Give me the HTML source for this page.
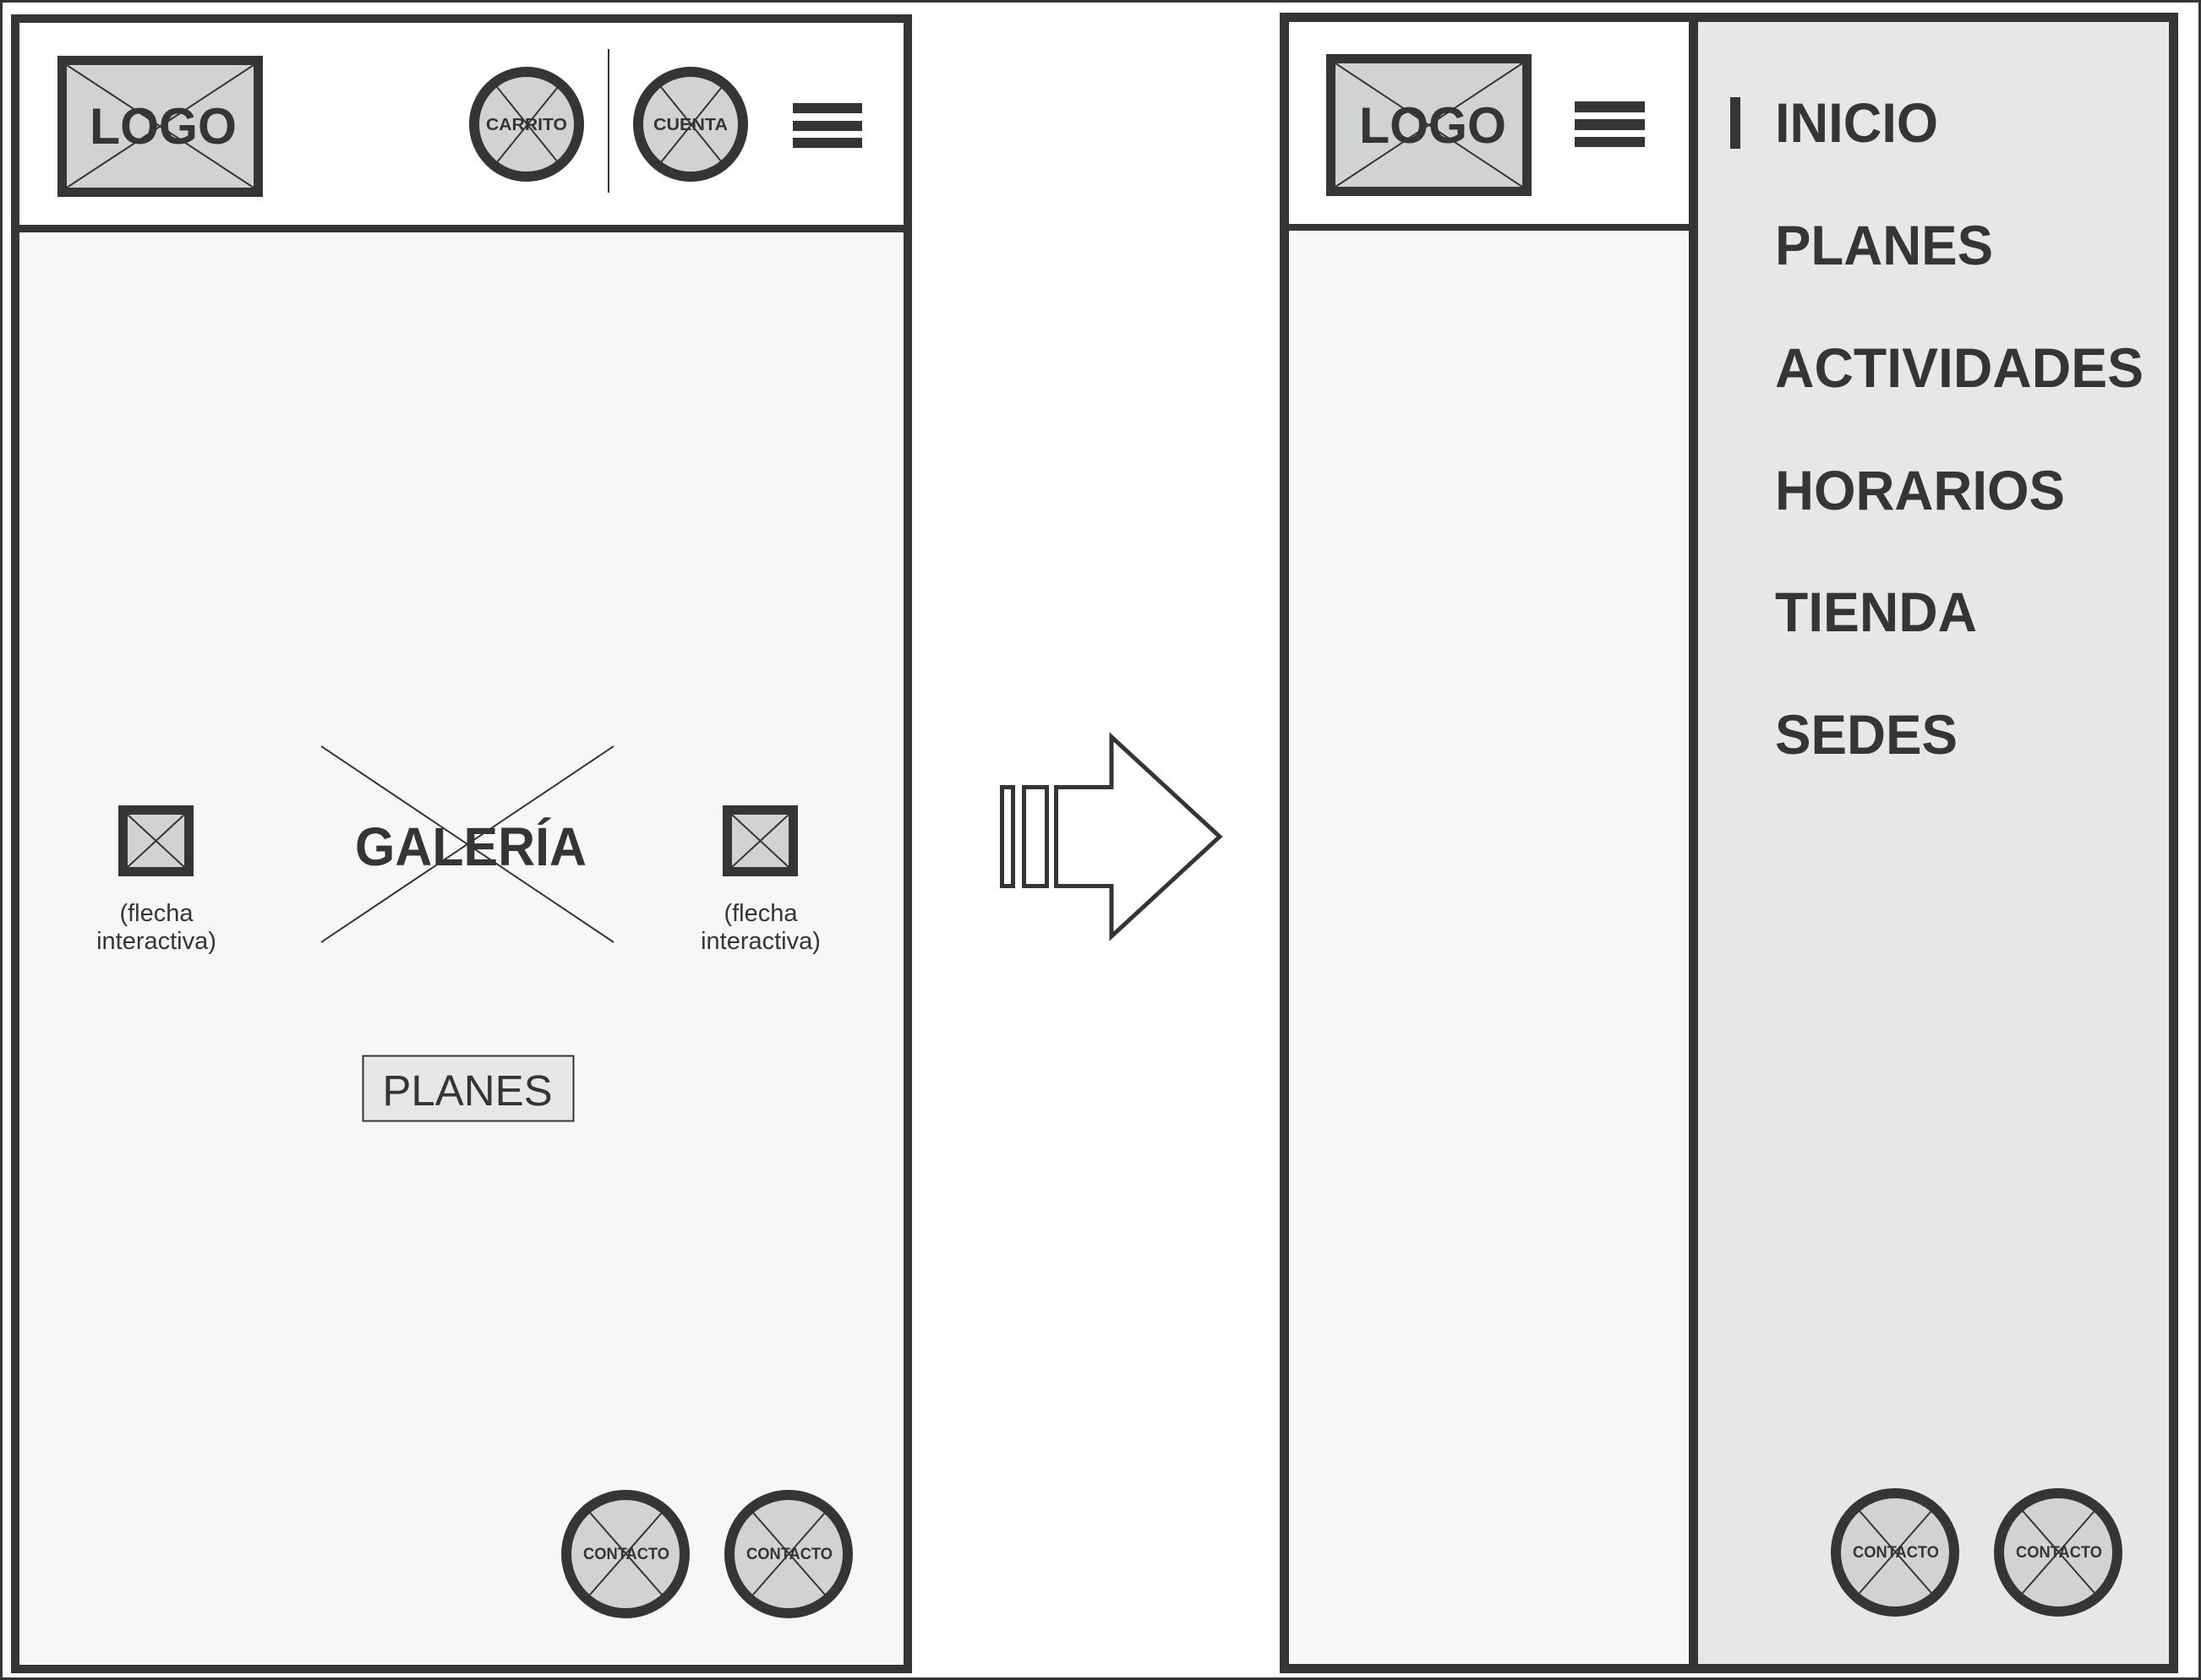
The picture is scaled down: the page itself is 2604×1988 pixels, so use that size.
<!DOCTYPE html>
<html><head><meta charset="utf-8"><style>
html,body{margin:0;padding:0;background:#fff;}
svg{display:block;}
text{font-family:"Liberation Sans",Arial,sans-serif;fill:#363435;}
</style></head><body>
<svg width="2604" height="1988" viewBox="0 0 2604 1988" xmlns="http://www.w3.org/2000/svg">
<rect x="1.5" y="1.5" width="2601" height="1985" fill="#fff" stroke="#363435" stroke-width="3"/>

<!-- LEFT PANEL -->
<rect x="18" y="22" width="1056" height="1953" fill="#f7f7f7" stroke="#363435" stroke-width="10"/>
<rect x="23" y="27" width="1046" height="240" fill="#fff"/>
<rect x="23" y="266" width="1046" height="9" fill="#363435"/>

<!-- logo -->
<rect x="73.5" y="71.5" width="232" height="156" fill="#d1d2d4" stroke="#363435" stroke-width="11"/>
<line x1="79" y1="77" x2="300" y2="222" stroke="#363435" stroke-width="2"/>
<line x1="300" y1="77" x2="79" y2="222" stroke="#363435" stroke-width="2"/>
<text x="106" y="170" font-size="60" font-weight="bold" textLength="174" lengthAdjust="spacingAndGlyphs">LOGO</text>

<!-- carrito -->
<circle cx="623" cy="147" r="62" fill="#d1d2d4" stroke="#363435" stroke-width="12"/>
<line x1="588" y1="103" x2="660" y2="192" stroke="#363435" stroke-width="2"/>
<line x1="660" y1="103" x2="588" y2="192" stroke="#363435" stroke-width="2"/>
<text x="575" y="154" font-size="20" font-weight="bold" textLength="96" lengthAdjust="spacingAndGlyphs">CARRITO</text>
<rect x="719" y="58" width="2" height="170" fill="#363435"/>
<!-- cuenta -->
<circle cx="817" cy="147" r="62" fill="#d1d2d4" stroke="#363435" stroke-width="12"/>
<line x1="782" y1="103" x2="854" y2="192" stroke="#363435" stroke-width="2"/>
<line x1="854" y1="103" x2="782" y2="192" stroke="#363435" stroke-width="2"/>
<text x="773" y="154" font-size="20" font-weight="bold" textLength="88" lengthAdjust="spacingAndGlyphs">CUENTA</text>
<!-- hamburger -->
<rect x="938" y="122" width="82" height="12" fill="#363435"/>
<rect x="938" y="143" width="82" height="12" fill="#363435"/>
<rect x="938" y="163" width="82" height="12" fill="#363435"/>

<!-- gallery -->
<rect x="145.5" y="958.5" width="78" height="73" fill="#d1d2d4" stroke="#363435" stroke-width="11"/>
<line x1="151" y1="964" x2="218" y2="1026" stroke="#363435" stroke-width="2"/>
<line x1="218" y1="964" x2="151" y2="1026" stroke="#363435" stroke-width="2"/>
<text x="185" y="1090" font-size="29" text-anchor="middle">(flecha</text>
<text x="185" y="1123" font-size="29" text-anchor="middle">interactiva)</text>
<rect x="860.5" y="958.5" width="78" height="73" fill="#d1d2d4" stroke="#363435" stroke-width="11"/>
<line x1="866" y1="964" x2="933" y2="1026" stroke="#363435" stroke-width="2"/>
<line x1="933" y1="964" x2="866" y2="1026" stroke="#363435" stroke-width="2"/>
<text x="900" y="1090" font-size="29" text-anchor="middle">(flecha</text>
<text x="900" y="1123" font-size="29" text-anchor="middle">interactiva)</text>

<line x1="380" y1="883" x2="726" y2="1115" stroke="#363435" stroke-width="2"/>
<line x1="726" y1="883" x2="380" y2="1115" stroke="#363435" stroke-width="2"/>
<text x="420" y="1024" font-size="64" font-weight="bold" textLength="274" lengthAdjust="spacingAndGlyphs">GALERÍA</text>

<rect x="429.5" y="1249.5" width="249" height="77" fill="#e6e7e8" stroke="#363435" stroke-width="2"/>
<text x="553" y="1308" font-size="51" text-anchor="middle">PLANES</text>

<!-- contact -->
<circle cx="740" cy="1839" r="70" fill="#d1d2d4" stroke="#363435" stroke-width="12"/>
<line x1="698" y1="1790" x2="783" y2="1887" stroke="#363435" stroke-width="2"/>
<line x1="783" y1="1790" x2="698" y2="1887" stroke="#363435" stroke-width="2"/>
<text x="690" y="1845" font-size="19" font-weight="bold" textLength="102" lengthAdjust="spacingAndGlyphs">CONTACTO</text>
<circle cx="933" cy="1839" r="70" fill="#d1d2d4" stroke="#363435" stroke-width="12"/>
<line x1="891" y1="1790" x2="976" y2="1887" stroke="#363435" stroke-width="2"/>
<line x1="976" y1="1790" x2="891" y2="1887" stroke="#363435" stroke-width="2"/>
<text x="883" y="1845" font-size="19" font-weight="bold" textLength="102" lengthAdjust="spacingAndGlyphs">CONTACTO</text>

<!-- ARROW -->
<rect x="1185.5" y="931.5" width="13" height="117" fill="#fff" stroke="#363435" stroke-width="5"/>
<rect x="1211.5" y="931.5" width="27" height="117" fill="#fff" stroke="#363435" stroke-width="5"/>
<path d="M1249.5 931.5 H1315 V872 L1443 990 L1315 1108 V1048.5 H1249.5 Z" fill="#fff" stroke="#363435" stroke-width="5" stroke-linejoin="miter"/>

<!-- RIGHT PANEL -->
<rect x="1519.5" y="20.5" width="1052" height="1954" fill="#f7f7f7" stroke="#363435" stroke-width="11"/>
<rect x="1525" y="26" width="473" height="239" fill="#fff"/>
<rect x="1525" y="265" width="473" height="8" fill="#363435"/>
<rect x="2009" y="26" width="557" height="1943" fill="#e6e7e8"/>
<rect x="1998" y="26" width="11" height="1943" fill="#363435"/>

<rect x="1574.5" y="69.5" width="232" height="157" fill="#d1d2d4" stroke="#363435" stroke-width="11"/>
<line x1="1580" y1="75" x2="1801" y2="221" stroke="#363435" stroke-width="2"/>
<line x1="1801" y1="75" x2="1580" y2="221" stroke="#363435" stroke-width="2"/>
<text x="1608" y="169" font-size="60" font-weight="bold" textLength="174" lengthAdjust="spacingAndGlyphs">LOGO</text>
<rect x="1863" y="120" width="83" height="13" fill="#363435"/>
<rect x="1863" y="141" width="83" height="13" fill="#363435"/>
<rect x="1863" y="162" width="83" height="12" fill="#363435"/>

<rect x="2047" y="115" width="12" height="61" fill="#363435"/>
<text x="2100" y="168" font-size="66" font-weight="bold" textLength="193" lengthAdjust="spacingAndGlyphs">INICIO</text>
<text x="2100" y="313" font-size="66" font-weight="bold" textLength="258" lengthAdjust="spacingAndGlyphs">PLANES</text>
<text x="2100" y="458" font-size="66" font-weight="bold" textLength="436" lengthAdjust="spacingAndGlyphs">ACTIVIDADES</text>
<text x="2100" y="603" font-size="66" font-weight="bold" textLength="343" lengthAdjust="spacingAndGlyphs">HORARIOS</text>
<text x="2100" y="747" font-size="66" font-weight="bold" textLength="239" lengthAdjust="spacingAndGlyphs">TIENDA</text>
<text x="2100" y="892" font-size="66" font-weight="bold" textLength="216" lengthAdjust="spacingAndGlyphs">SEDES</text>

<circle cx="2242" cy="1837" r="70" fill="#d1d2d4" stroke="#363435" stroke-width="12"/>
<line x1="2200" y1="1788" x2="2285" y2="1885" stroke="#363435" stroke-width="2"/>
<line x1="2285" y1="1788" x2="2200" y2="1885" stroke="#363435" stroke-width="2"/>
<text x="2192" y="1843" font-size="19" font-weight="bold" textLength="102" lengthAdjust="spacingAndGlyphs">CONTACTO</text>
<circle cx="2435" cy="1837" r="70" fill="#d1d2d4" stroke="#363435" stroke-width="12"/>
<line x1="2393" y1="1788" x2="2478" y2="1885" stroke="#363435" stroke-width="2"/>
<line x1="2478" y1="1788" x2="2393" y2="1885" stroke="#363435" stroke-width="2"/>
<text x="2385" y="1843" font-size="19" font-weight="bold" textLength="102" lengthAdjust="spacingAndGlyphs">CONTACTO</text>
</svg>
</body></html>
